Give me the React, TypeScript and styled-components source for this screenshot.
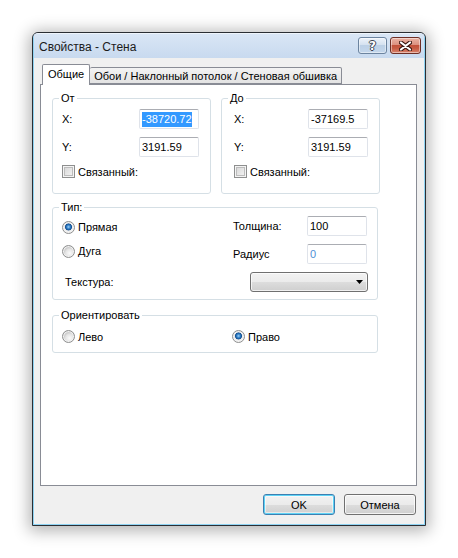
import React from "react";
import styled, { createGlobalStyle } from "styled-components";

const Global = createGlobalStyle`
  html, body { margin: 0; padding: 0; background: #ffffff; }
  body { font-family: "Liberation Sans", Arial, sans-serif; font-size: 11px; color: #000; }
  * { box-sizing: border-box; }
`;

const Page = styled.div`
  padding: 32px 0 0 32px;
  width: 458px;
  height: 558px;
`;

const Window = styled.div`
  width: 394px;
  height: 494px;
  border: 1px solid #2a2e33;
  border-radius: 6px 6px 0 0;
  box-shadow: 0 2px 16px 3px rgba(0, 0, 0, 0.3);
  background: #c9daee;
  display: flex;
  flex-direction: column;
  overflow: hidden;
`;

const Inner = styled.div`
  flex: 1;
  display: flex;
  flex-direction: column;
  border: 1px solid #8fd3f2;
  border-radius: 5px 5px 0 0;
  border-top-color: #eef4fb;
`;

const TitleBar = styled.div`
  height: 24px;
  display: flex;
  align-items: center;
  padding: 0 3px 0 5px;
  background: linear-gradient(#d9e6f5, #c8daef);
`;

const Title = styled.div`
  flex: 1;
  font-size: 12px;
  color: #1b1b1b;
  padding-top: 2px;
`;

const CaptionButtons = styled.div`
  display: flex;
  gap: 3px;
  align-self: flex-start;
  margin-top: 3px;
`;

const CaptionButton = styled.div<{ $close?: boolean }>`
  width: ${(p) => (p.$close ? 31 : 29)}px;
  height: 17px;
  border-radius: 3px;
  border: 1px solid ${(p) => (p.$close ? "#6e2f26" : "#6c84a0")};
  background: ${(p) =>
    p.$close
      ? "linear-gradient(#eab3a4 0%, #dc9180 45%, #c2513a 50%, #c75d45 70%, #d9856f 100%)"
      : "linear-gradient(#edf3fa 0%, #d5e2f0 45%, #bcd0e6 50%, #c4d7ec 100%)"};
  box-shadow: inset 0 0 0 1px rgba(255, 255, 255, 0.45);
  display: flex;
  align-items: center;
  justify-content: center;
`;

const HelpGlyph = styled.span`
  font-family: "DejaVu Sans", sans-serif;
  font-weight: bold;
  font-size: 12px;
  line-height: 12px;
  color: #ffffff;
  text-shadow: 1px 0 0 #3a4350, -1px 0 0 #3a4350, 0 1px 0 #3a4350, 0 -1px 0 #3a4350;
`;

const Client = styled.div`
  flex: 1;
  background: #f0f0f0;
  display: flex;
  flex-direction: column;
  padding: 6px 7px 8px 6px;
`;

const TabStrip = styled.div`
  height: 20px;
  display: flex;
  align-items: flex-end;
  padding-left: 2px;
`;

const Tab = styled.div<{ $active?: boolean }>`
  height: ${(p) => (p.$active ? 21 : 17)}px;
  margin-bottom: ${(p) => (p.$active ? -1 : 0)}px;
  position: relative;
  z-index: ${(p) => (p.$active ? 2 : 1)};
  padding: 0 ${(p) => (p.$active ? 5 : 4)}px;
  border: 1px solid #898c95;
  border-bottom: ${(p) => (p.$active ? "none" : "1px solid #898c95")};
  border-left: ${(p) => (p.$active ? "1px solid #898c95" : "none")};
  border-radius: 2px 2px 0 0;
  background: ${(p) => (p.$active ? "#ffffff" : "linear-gradient(#f3f3f3, #e3e3e3)")};
  display: flex;
  align-items: ${(p) => (p.$active ? "flex-start" : "center")};
  padding-top: ${(p) => (p.$active ? 3 : 0)}px;
  font-size: 11px;
  white-space: nowrap;
`;

const Panel = styled.div`
  height: 402px;
  background: #ffffff;
  border: 1px solid #898c95;
  padding: 7px 0 0 11px;
  display: flex;
  flex-direction: column;
  gap: 7px;
`;

const GroupRow = styled.div`
  display: flex;
  gap: 10px;
`;

const Group = styled.fieldset<{ $w: number; $h: number; $pad: number; $top: number; $mt?: number }>`
  width: ${(p) => p.$w}px;
  height: ${(p) => p.$h}px;
  margin: ${(p) => p.$mt ?? 0}px 0 0 0;
  border: 1px solid #d5dfe5;
  border-radius: 3px;
  padding: ${(p) => p.$top}px 0 0 ${(p) => p.$pad}px;
  display: flex;
  flex-direction: column;
  gap: 8px;
  min-width: 0;
`;

const Legend = styled.legend<{ $pad: number }>`
  font-size: 11px;
  line-height: 13px;
  padding: 0 2px;
  margin-left: ${(p) => 6 - p.$pad}px;
  color: #000;
`;

const Row = styled.div<{ $h?: number }>`
  display: flex;
  align-items: center;
  height: ${(p) => p.$h ?? 20}px;
`;

const Label = styled.div<{ $w?: number; $ml?: number }>`
  width: ${(p) => (p.$w ? `${p.$w}px` : "auto")};
  margin-left: ${(p) => p.$ml ?? 0}px;
  flex-shrink: 0;
  white-space: nowrap;
`;

const Input = styled.div<{ $muted?: boolean }>`
  width: 60px;
  height: 20px;
  border: 1px solid #dfe3ea;
  border-top-color: #abadb3;
  border-radius: 2px;
  background: #fff;
  padding: 0 0 0 2px;
  display: flex;
  align-items: center;
  font-size: 11px;
  color: ${(p) => (p.$muted ? "#4f8fd6" : "#000")};
  overflow: hidden;
  white-space: nowrap;
`;

const Selection = styled.span`
  background: #3399ff;
  color: #fff;
  line-height: 15px;
`;

const Check = styled.span`
  width: 13px;
  height: 13px;
  flex-shrink: 0;
  border: 1px solid #8e8f8f;
  background: linear-gradient(135deg, #d3d3d3, #f7f7f7);
  box-shadow: inset 0 0 0 1px #f4f4f4, inset 0 0 0 2px #bdbdbd;
  margin-right: 3px;
`;

const Radio = styled.span<{ $on?: boolean }>`
  width: 13px;
  height: 13px;
  flex-shrink: 0;
  border-radius: 50%;
  border: 1px solid #8e8f8f;
  background: ${(p) =>
    p.$on
      ? "radial-gradient(circle at 50% 45%, #9fd0f5 0px, #2a7ac4 2px, #174f8e 3.2px, #e8e8e8 3.8px, #f2f2f2 5px)"
      : "radial-gradient(circle at 60% 65%, #fbfbfb 0px, #e4e4e4 4px, #cfcfcf 5.5px)"};
  box-shadow: inset 0 0 0 1px #f2f2f2;
  margin-right: 3px;
`;

const Option = styled.div<{ $w?: number; $dy?: number }>`
  display: flex;
  align-items: center;
  width: ${(p) => (p.$w ? `${p.$w}px` : "auto")};
  flex-shrink: 0;
  position: relative;
  top: ${(p) => p.$dy ?? 0}px;
`;

const Combo = styled.div`
  width: 118px;
  height: 20px;
  border: 1px solid #707070;
  border-radius: 3px;
  background: linear-gradient(#f2f2f2 0%, #ebebeb 50%, #dddddd 50%, #cfcfcf 100%);
  box-shadow: inset 0 0 0 1px rgba(255, 255, 255, 0.7);
  display: flex;
  align-items: center;
  justify-content: flex-end;
  padding-right: 3px;
`;

const ButtonBar = styled.div`
  margin-top: 8px;
  display: flex;
  justify-content: flex-end;
  gap: 9px;
  padding-right: 1px;
`;

const Button = styled.div<{ $default?: boolean }>`
  width: 72px;
  height: 21px;
  border-radius: 3px;
  border: 1px solid ${(p) => (p.$default ? "#3c7fb1" : "#707070")};
  background: linear-gradient(#f2f2f2 0%, #ebebeb 50%, #dddddd 50%, #cfcfcf 100%);
  box-shadow: ${(p) =>
    p.$default
      ? "inset 0 0 0 1px #5ed3f6, inset 0 0 0 2px rgba(255,255,255,0.5)"
      : "inset 0 0 0 1px rgba(255,255,255,0.75)"};
  display: flex;
  align-items: center;
  justify-content: center;
  font-size: 11px;
`;

const Spacer = styled.div`
  flex: 1;
`;

const CloseIcon = () => (
  <svg width="13" height="10" viewBox="0 0 13 10">
    <path d="M2 1.5 L11 8.5 M11 1.5 L2 8.5" stroke="#3b1812" strokeWidth="4.2" strokeLinecap="round" />
    <path d="M2 1.5 L11 8.5 M11 1.5 L2 8.5" stroke="#ffffff" strokeWidth="2.2" strokeLinecap="round" />
  </svg>
);

const Arrow = () => (
  <svg width="8" height="4" viewBox="0 0 8 4">
    <path d="M0 0 H7 L3.5 4 Z" fill="#000" />
  </svg>
);

export default function App() {
  return (
    <>
      <Global />
      <Page>
        <Window>
          <Inner>
            <TitleBar>
              <Title>Свойства - Стена</Title>
              <CaptionButtons>
                <CaptionButton>
                  <HelpGlyph>?</HelpGlyph>
                </CaptionButton>
                <CaptionButton $close>
                  <CloseIcon />
                </CaptionButton>
              </CaptionButtons>
            </TitleBar>
            <Client>
              <TabStrip>
                <Tab $active>Общие</Tab>
                <Tab>Обои / Наклонный потолок / Стеновая обшивка</Tab>
              </TabStrip>
              <Panel>
                <GroupRow>
                  <Group $w={159} $h={102} $pad={9} $top={4}>
                    <Legend $pad={9}>От</Legend>
                    <Row>
                      <Label $w={77}>X:</Label>
                      <Input>
                        <Selection>-38720.72</Selection>
                      </Input>
                    </Row>
                    <Row>
                      <Label $w={77}>Y:</Label>
                      <Input>3191.59</Input>
                    </Row>
                    <Row $h={13}>
                      <Check />
                      <Label>Связанный:</Label>
                    </Row>
                  </Group>
                  <Group $w={159} $h={102} $pad={12} $top={4}>
                    <Legend $pad={12}>До</Legend>
                    <Row>
                      <Label $w={74}>X:</Label>
                      <Input>-37169.5</Input>
                    </Row>
                    <Row>
                      <Label $w={74}>Y:</Label>
                      <Input>3191.59</Input>
                    </Row>
                    <Row $h={13}>
                      <Check />
                      <Label>Связанный:</Label>
                    </Row>
                  </Group>
                </GroupRow>
                <Group $w={326} $h={99} $pad={9} $top={2}>
                  <Legend $pad={9}>Тип:</Legend>
                  <Row>
                    <Option $w={171} $dy={1}>
                      <Radio $on />
                      <Label>Прямая</Label>
                    </Option>
                    <Label $w={74}>Толщина:</Label>
                    <Input>100</Input>
                  </Row>
                  <Row>
                    <Option $w={171} $dy={-3}>
                      <Radio />
                      <Label>Дуга</Label>
                    </Option>
                    <Label $w={74}>Радиус</Label>
                    <Input $muted>0</Input>
                  </Row>
                  <Row>
                    <Label $w={185} $ml={3}>Текстура:</Label>
                    <Combo>
                      <Arrow />
                    </Combo>
                  </Row>
                </Group>
                <Group $w={326} $h={44} $pad={9} $top={8} $mt={2}>
                  <Legend $pad={9}>Ориентировать</Legend>
                  <Row $h={13}>
                    <Option $w={170}>
                      <Radio />
                      <Label>Лево</Label>
                    </Option>
                    <Option>
                      <Radio $on />
                      <Label>Право</Label>
                    </Option>
                  </Row>
                </Group>
                <Spacer />
              </Panel>
              <ButtonBar>
                <Button $default>OK</Button>
                <Button>Отмена</Button>
              </ButtonBar>
            </Client>
          </Inner>
        </Window>
      </Page>
    </>
  );
}
